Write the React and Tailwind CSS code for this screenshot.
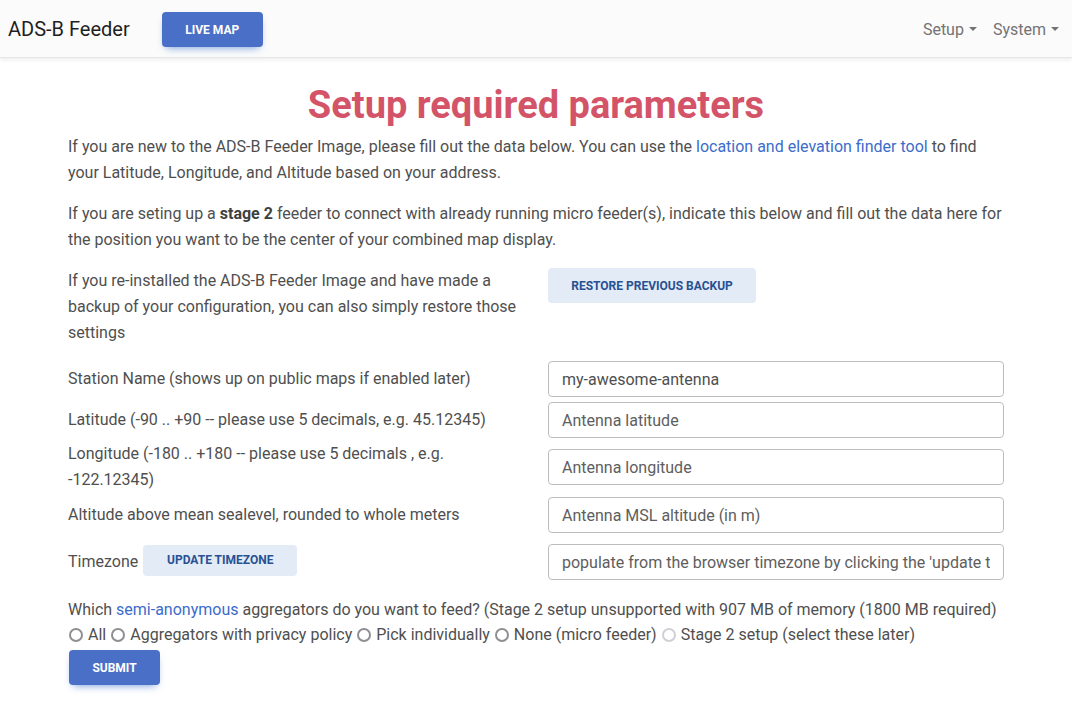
import React from 'react';

function Caret() {
  return <span className="inline-block ml-[5px] align-middle border-x-[4px] border-x-transparent border-t-[4px] border-t-current relative top-[-1px]" />;
}

function Radio({ label, disabled }) {
  return (
    <label className="inline-flex items-center mr-[5px]">
      <span className={`inline-block w-[14px] h-[14px] rounded-full border-2 mr-[5px] ${disabled ? 'border-[#cfcfd6]' : 'border-[#8e8e93]'}`} />
      <span>{label}</span>
    </label>
  );
}

function FieldRow({ label, placeholder, value, className = '' }) {
  return (
    <div className={`flex items-center ${className}`}>
      <div className="w-[480px] pr-[36px] leading-[26px]">{label}</div>
      <input
        readOnly
        value={value}
        placeholder={placeholder}
        className="w-[456px] h-[36px] px-[13px] border border-[#bdbdbd] rounded-[4px] bg-white text-[16px] text-[#4f4f4f] placeholder:text-[#5e5e5e] outline-none"
      />
    </div>
  );
}

export default function App() {
  return (
    <div className="min-h-[727px] bg-white text-[#4f4f4f] text-[16px]" style={{ fontFamily: 'Roboto, "Liberation Sans", sans-serif' }}>
      {/* Navbar */}
      <nav className="h-[58px] bg-[#fbfbfb] flex items-center px-[8px] shadow-[0_2px_4px_rgba(0,0,0,0.07)] border-b border-[#e6e6e6]">
        <span className="text-[20px] text-[#1f1f1f] mr-[32px]">ADS-B Feeder</span>
        <button className="w-[101px] h-[35px] rounded-[4px] bg-[#4a6fc6] text-white text-[12px] font-bold uppercase shadow-[0_4px_9px_-4px_rgba(59,113,202,0.8)] relative top-[1px]">
          Live Map
        </button>
        <div className="ml-auto flex items-center text-[16px] text-[#737373] pr-[5px] relative top-[1px]">
          <span className="flex items-center">Setup<Caret /></span>
          <span className="flex items-center ml-[16px]">System<Caret /></span>
        </div>
      </nav>

      {/* Content */}
      <div className="w-[936px] mx-auto">
        <h1 className="text-center text-[38px] font-bold leading-[46px] text-[#d35468] mt-[24px] mb-[6px]">
          Setup required parameters
        </h1>
        <p className="leading-[26px] mb-[15px]">
          If you are new to the ADS-B Feeder Image, please fill out the data below. You can use the{' '}
          <a className="text-[#3b6ccb]">location and elevation finder tool</a> to find your Latitude, Longitude, and Altitude based on your address.
        </p>
        <p className="leading-[26px] mb-[15px]">
          If you are seting up a <b className="text-[#3f3f3f]">stage 2</b> feeder to connect with already running micro feeder(s), indicate this below and fill out the data here for the position you want to be the center of your combined map display.
        </p>

        <div className="flex items-start mb-[15px]">
          <div className="w-[480px] pr-[24px] leading-[26px]">
            If you re-installed the ADS-B Feeder Image and have made a backup of your configuration, you can also simply restore those settings
          </div>
          <button className="w-[208px] h-[35px] rounded-[4px] bg-[#e3ebf7] text-[#285192] text-[12px] font-bold uppercase">
            Restore previous backup
          </button>
        </div>

        <FieldRow label="Station Name (shows up on public maps if enabled later)" value="my-awesome-antenna" className="mb-[5px]" />
        <FieldRow label="Latitude (-90 .. +90 -- please use 5 decimals, e.g. 45.12345)" placeholder="Antenna latitude" className="mb-[3px]" />
        <FieldRow label="Longitude (-180 .. +180 -- please use 5 decimals , e.g. -122.12345)" placeholder="Antenna longitude" className="mb-[4px]" />
        <FieldRow label="Altitude above mean sealevel, rounded to whole meters" placeholder="Antenna MSL altitude (in m)" className="mb-[11px]" />

        <div className="flex items-center">
          <div className="w-[480px] pr-[12px] flex items-center">
            <span className="mr-[5px]">Timezone</span>
            <button className="w-[154px] h-[31px] rounded-[4px] bg-[#e3ebf7] text-[#285192] text-[12px] font-bold uppercase relative top-[-2px]">
              Update Timezone
            </button>
          </div>
          <input
            readOnly
            placeholder="populate from the browser timezone by clicking the 'update timezone' button"
            className="w-[456px] h-[36px] px-[13px] border border-[#bdbdbd] rounded-[4px] bg-white text-[16px] placeholder:text-[#5e5e5e] outline-none"
          />
        </div>

        <p className="leading-[26px] mt-[17px]">
          Which <a className="text-[#3b6ccb]">semi-anonymous</a> aggregators do you want to feed? (Stage 2 setup unsupported with 907 MB of memory (1800 MB required)
        </p>
        <div className="flex items-center leading-[24px] pl-[1px]">
          <Radio label="All" />
          <Radio label="Aggregators with privacy policy" />
          <Radio label="Pick individually" />
          <Radio label="None (micro feeder)" />
          <Radio label="Stage 2 setup (select these later)" disabled />
        </div>
        <button className="mt-[3px] ml-[1px] w-[91px] h-[35px] rounded-[4px] bg-[#4a6fc6] text-white text-[12px] font-bold uppercase shadow-[0_4px_9px_-4px_rgba(59,113,202,0.8)]">
          Submit
        </button>
      </div>
    </div>
  );
}
